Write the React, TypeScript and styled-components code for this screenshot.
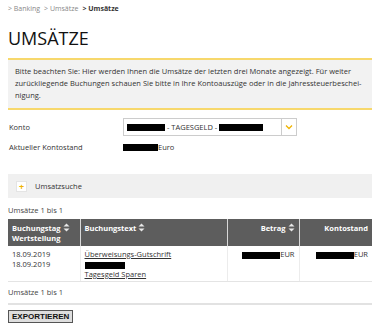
import React from "react";
import styled, { createGlobalStyle } from "styled-components";

const GlobalStyle = createGlobalStyle`
    body {
        margin: 0;
        background: #fff;
        font-family: "Open Sans", "Liberation Sans", sans-serif;
        color: #333;
    }
`;

const SortIcon = () => (
    <svg width="7" height="9" viewBox="0 0 7 9">
        <path d="M3.5 0.5 L6.5 3.5 H0.5 Z" fill="#e8e8e8" />
        <path d="M3.5 8.5 L6.5 5.5 H0.5 Z" fill="#e8e8e8" />
    </svg>
);

export default function App() {
    return (
        <Page>
            <GlobalStyle />
            <Breadcrumb>
                <Crumb>&gt; Banking</Crumb>
                <Crumb>&gt; Umsätze</Crumb>
                <Crumb $current>&gt; Umsätze</Crumb>
            </Breadcrumb>
            <Title>UMSÄTZE</Title>
            <Notice>
                Bitte beachten Sie: Hier werden Ihnen die Umsätze der letzten drei Monate angezeigt. Für weiter
                zurückliegende Buchungen schauen Sie bitte in Ihre Kontoauszüge oder in die Jahressteuerbeschei-
                nigung.
            </Notice>
            <Form>
                <Label>Konto</Label>
                <Select>
                    <SelectValue>
                        <Redacted $w={38} />
                        &nbsp;- TAGESGELD -&nbsp;
                        <Redacted $w={44} />
                    </SelectValue>
                    <SelectButton>
                        <svg width="8" height="6" viewBox="0 0 8 6">
                            <path d="M1 1.5 L4 4.5 L7 1.5" stroke="#f0b400" strokeWidth="1.3" fill="none" />
                        </svg>
                    </SelectButton>
                </Select>
                <Label>Aktueller Kontostand</Label>
                <Value>
                    <Redacted $w={35} />
                    Euro
                </Value>
            </Form>
            <SearchPanel>
                <PlusBox>+</PlusBox>
                <span>Umsatzsuche</span>
            </SearchPanel>
            <Count>Umsätze 1 bis 1</Count>
            <Table>
                <colgroup>
                    <col style={{ width: 72 }} />
                    <col style={{ width: 147 }} />
                    <col style={{ width: 72 }} />
                    <col style={{ width: 73 }} />
                </colgroup>
                <thead>
                    <tr>
                        <Th>
                            Buchungstag <SortIcon />
                            <br />
                            Wertstellung
                        </Th>
                        <Th>
                            Buchungstext <SortIcon />
                        </Th>
                        <Th $right>
                            Betrag <SortIcon />
                        </Th>
                        <Th $right>Kontostand</Th>
                    </tr>
                </thead>
                <tbody>
                    <tr>
                        <Td>
                            18.09.2019
                            <br />
                            18.09.2019
                        </Td>
                        <Td>
                            <TextLink>Überweisungs-Gutschrift</TextLink>
                            <br />
                            <Redacted $w={40} />
                            <br />
                            <TextLink>Tagesgeld Sparen</TextLink>
                        </Td>
                        <Td $right>
                            <Redacted $w={38} />
                            EUR
                        </Td>
                        <Td $right>
                            <Redacted $w={38} />
                            EUR
                        </Td>
                    </tr>
                </tbody>
            </Table>
            <Count $bottom>Umsätze 1 bis 1</Count>
            <Divider />
            <ExportButton>EXPORTIEREN</ExportButton>
        </Page>
    );
}

const Page = styled.div`
    width: 364px;
    padding: 4px 8px 8px;
    font-size: 7.5px;
`;

const Breadcrumb = styled.div`
    display: flex;
    gap: 4px;
    font-size: 7px;
    color: #888;
    height: 10px;
    line-height: 10px;
`;

const Crumb = styled.span<{ $current?: boolean }>`
    color: ${(p) => (p.$current ? "#333" : "#888")};
    font-weight: ${(p) => (p.$current ? 700 : 400)};
`;

const Title = styled.h1`
    margin: 13px 0 0;
    font-size: 18px;
    font-weight: 400;
    color: #111;
    line-height: 22px;
    height: 31px;
`;

const Notice = styled.div`
    background: #f2f2f2;
    border-top: 2px solid #f7d86c;
    border-bottom: 2px solid #f7d86c;
    padding: 5px 7px 7px;
    line-height: 12px;
    color: #333;
    height: 36px;
`;

const Form = styled.div`
    display: grid;
    grid-template-columns: 114px 174px;
    align-items: center;
    row-gap: 6px;
    padding: 8px 0 0 1px;
    height: 52px;
    box-sizing: border-box;
    align-content: start;
`;

const Label = styled.div`
    color: #333;
`;

const Select = styled.div`
    display: flex;
    height: 16px;
    border: 1px solid #ccc;
    background: #fff;
`;

const SelectValue = styled.div`
    flex: 1;
    display: flex;
    align-items: center;
    padding-left: 3px;
    color: #333;
`;

const SelectButton = styled.div`
    width: 14px;
    border-left: 1px solid #ccc;
    display: flex;
    align-items: center;
    justify-content: center;
`;

const Value = styled.div`
    display: flex;
    align-items: center;
    color: #333;
`;

const Redacted = styled.span<{ $w: number }>`
    display: inline-block;
    width: ${(p) => p.$w}px;
    height: 7px;
    background: #000;
    vertical-align: middle;
`;

const SearchPanel = styled.div`
    display: flex;
    align-items: center;
    gap: 8px;
    height: 24px;
    margin-top: 12px;
    padding-left: 8px;
    background: #f0f0f0;
    color: #333;
`;

const PlusBox = styled.span`
    width: 9px;
    height: 9px;
    background: #fff;
    border: 1px solid #e4e4e4;
    color: #f0b400;
    font-size: 9px;
    line-height: 9px;
    text-align: center;
    font-weight: 700;
`;

const Count = styled.div<{ $bottom?: boolean }>`
    color: #444;
    margin-top: ${(p) => (p.$bottom ? "5px" : "7px")};
    margin-bottom: ${(p) => (p.$bottom ? "0" : "4px")};
    line-height: 10px;
`;

const Table = styled.table`
    width: 364px;
    border-collapse: collapse;
    table-layout: fixed;
`;

const Th = styled.th<{ $right?: boolean }>`
    background: #5d5d5d;
    color: #fff;
    font-weight: 700;
    text-align: ${(p) => (p.$right ? "right" : "left")};
    vertical-align: top;
    padding: 4px 4px 3px;
    line-height: 10px;
    border-left: 1px solid #d8d8d8;
    height: 18px;
    &:first-child {
        border-left: none;
    }
    svg {
        vertical-align: -1px;
    }
`;

const Td = styled.td<{ $right?: boolean }>`
    text-align: ${(p) => (p.$right ? "right" : "left")};
    vertical-align: top;
    padding: 3px 4px 2px;
    line-height: 10px;
    color: #333;
    border-left: 1px solid #ececec;
    border-bottom: 1px solid #e4e4e4;
    &:first-child {
        border-left: none;
    }
`;

const TextLink = styled.a`
    color: #333;
    text-decoration: underline;
`;

const Divider = styled.div`
    height: 2px;
    background: #e2e2e2;
    margin-top: 6px;
`;

const ExportButton = styled.button`
    margin-top: 5px;
    font-family: "Liberation Sans", sans-serif;
    font-size: 8px;
    font-weight: 700;
    color: #111;
    background: #dedede;
    border: 1px solid #555;
    padding: 1px 3px;
    line-height: 9px;
`;
